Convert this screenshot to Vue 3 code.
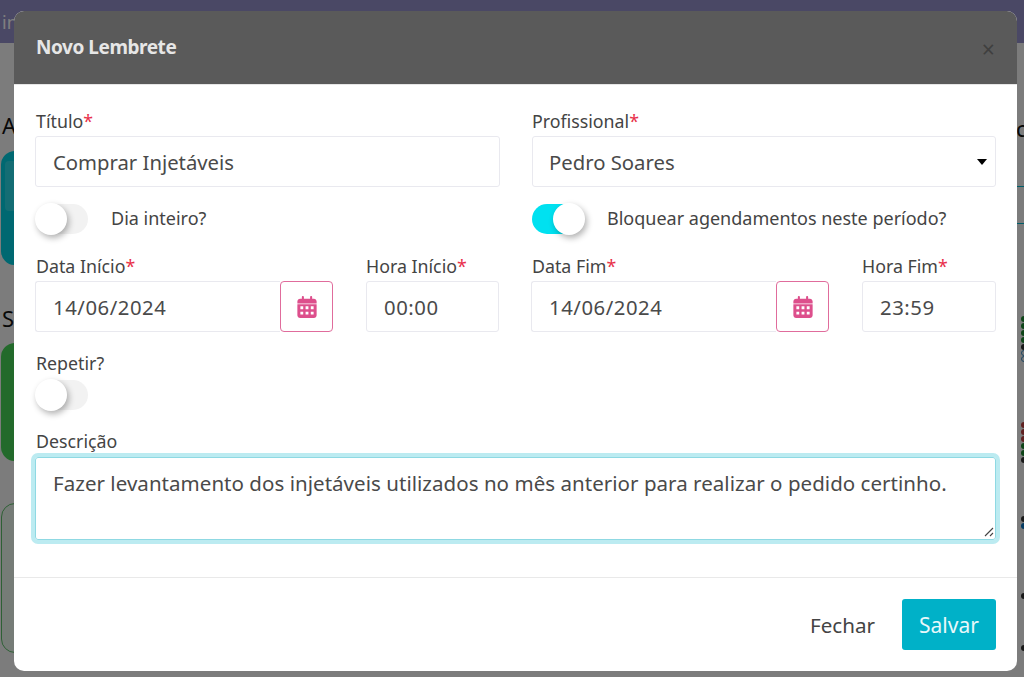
<script setup>
const dotsA = ['#1c8a30', '#1c8a30', '#1c8a30', '#1c8a30', '#333']
const dotsB = ['#c04040', '#c04040', '#c04040', '#1c8a30', '#1c8a30', '#333']
const calendarPath = 'M152 24c0-13-11-24-24-24s-24 11-24 24v40H64C29 64 0 93 0 128v48h448v-48c0-35-29-64-64-64h-40V24c0-13-11-24-24-24s-24 11-24 24v40H152V24zM0 192v256c0 35 29 64 64 64h320c35 0 64-29 64-64V192H0zM70 240h66v66H70zM191 240h66v66h-66zM312 240h66v66h-66zM70 364h66v66H70zM191 364h66v66h-66zM312 364h66v66h-66z'
</script>

<template>
  <div class="page">
    <header class="topbar"><span class="topbar-text">in</span></header>
    <div class="under">
      <div class="under-left">
        <div class="under-letter first">A</div>
        <div class="tile teal"><div class="tile-inner"></div></div>
        <div class="under-letter second">S</div>
        <div class="tile green"></div>
        <div class="tile outline"></div>
      </div>
      <div class="under-right">
        <div class="under-letter c">c</div>
        <div class="rule"></div>
        <div class="rule short"></div>
        <div class="dots">
          <i v-for="(c, n) in dotsA" :key="n" :style="{ background: c }"></i>
          <i class="ring"></i>
          <i class="ring"></i>
        </div>
        <div class="dots lower">
          <i v-for="(c, n) in dotsB" :key="n" :style="{ background: c }"></i>
        </div>
        <div class="dots third">
          <i class="dark"></i>
          <i class="blue"></i>
        </div>
        <div class="dots fourth"><i class="dark"></i></div>
        <div class="dots fifth"><i class="dark"></i></div>
      </div>
    </div>

    <div class="backdrop"></div>

    <section class="modal">
      <div class="modal-head">
        <h5>Novo Lembrete</h5>
        <span class="close">×</span>
      </div>
      <div class="modal-body">
        <div class="two-col">
          <div class="field lead">
            <label>Título<b>*</b></label>
            <div class="control">Comprar Injetáveis</div>
          </div>
          <div class="field">
            <label>Profissional<b>*</b></label>
            <div class="control select">Pedro Soares<span class="caret"></span></div>
          </div>
        </div>
        <div class="two-col toggles">
          <div class="toggle-row">
            <span class="switch"><span class="knob"></span></span>
            <span class="toggle-label">Dia inteiro?</span>
          </div>
          <div class="toggle-row shifted">
            <span class="switch on"><span class="knob"></span></span>
            <span class="toggle-label">Bloquear agendamentos neste período?</span>
          </div>
        </div>
        <div class="two-col dates">
          <div class="date-pair">
            <div class="field lead">
              <label>Data Início<b>*</b></label>
              <div class="group">
                <div class="control num">14/06/2024</div>
                <span class="cal">
                  <svg viewBox="0 0 448 512" width="20" height="22"><path fill="#dd4f8c" fill-rule="evenodd" :d="calendarPath"/></svg>
                </span>
              </div>
            </div>
            <div class="field">
              <label>Hora Início<b>*</b></label>
              <div class="control num">00:00</div>
            </div>
          </div>
          <div class="date-pair shifted">
            <div class="field lead">
              <label>Data Fim<b>*</b></label>
              <div class="group">
                <div class="control num">14/06/2024</div>
                <span class="cal">
                  <svg viewBox="0 0 448 512" width="20" height="22"><path fill="#dd4f8c" fill-rule="evenodd" :d="calendarPath"/></svg>
                </span>
              </div>
            </div>
            <div class="field">
              <label>Hora Fim<b>*</b></label>
              <div class="control num">23:59</div>
            </div>
          </div>
        </div>
        <div class="repeat lead">
          <label>Repetir?</label>
          <span class="switch"><span class="knob"></span></span>
        </div>
        <div class="field desc lead">
          <label>Descrição</label>
          <div class="textarea">
            Fazer levantamento dos injetáveis utilizados no mês anterior para realizar o pedido certinho.
            <svg class="grip" viewBox="0 0 10 10" width="10" height="10"><path d="M1 9 9 1M6 9 9 6" stroke="#444" stroke-width="1.1" fill="none"/></svg>
          </div>
        </div>
      </div>
      <div class="modal-foot">
        <span class="btn-text">Fechar</span>
        <span class="btn-save">Salvar</span>
      </div>
    </section>
  </div>
</template>

<style>
html, body { margin: 0; background: #fff; overflow: hidden; }
</style>

<style scoped>
.page {
  position: relative;
  width: 1024px;
  height: 677px;
  overflow: hidden;
  background: #f8f8f8;
  font-family: "Noto Sans", "Open Sans", sans-serif;
  color: #444;
}
.topbar { height: 43px; background: #9490ca; box-sizing: border-box; padding: 10px 0 0 2px; }
.topbar-text { color: #fff; font-size: 18px; }
.under { display: flex; justify-content: space-between; height: 634px; }
.under-left { width: 14px; overflow: hidden; flex: none; }
.under-right { width: 7px; overflow: hidden; flex: none; }
.under-letter { font-size: 22px; color: #111; line-height: 26px; }
.first { margin: 69px 0 0 2px; }
.second { margin: 40px 0 0 2px; }
.tile { width: 40px; margin-left: 1px; border-radius: 14px; box-sizing: border-box; }
.teal { height: 114px; margin-top: 13px; background: #00d0e2; padding: 10px 4px; }
.tile-inner { height: 50px; border-radius: 4px; background: #28dbe8; }
.green { height: 118px; margin-top: 12px; background: #46d456; }
.outline { height: 150px; margin-top: 42px; background: #edf8ef; border: 1px solid #5cc06a; }
.c { margin: 72px 0 0 -1px; height: 26px; }
.rule { height: 1px; background: #00bcd4; margin-top: 45px; }
.short { margin-top: 36px; }
.dots { display: flex; flex-direction: column; gap: 1px; margin-top: 92px; margin-left: 4px; }
.dots.lower { margin-top: 60px; }
.dots.third { margin-top: 53px; }
.dots.fourth { margin-top: 64px; }
.dots.fifth { margin-top: 46px; }
.dots i { display: block; width: 6px; height: 6px; border-radius: 50%; flex: none; }
.dots i.ring { box-sizing: border-box; border: 1px solid #3f90c8; margin-top: -1px; }
.dots i.dark { background: #333; }
.dots i.blue { background: #0a78c8; }

.backdrop { position: absolute; inset: 0; background: rgba(0, 0, 0, .5); }

.modal {
  position: absolute;
  left: 14px;
  top: 11px;
  width: 1003px;
  height: 660px;
  display: flex;
  flex-direction: column;
  background: #fff;
  border-radius: 10px;
  overflow: hidden;
}
.modal-head {
  height: 73px;
  flex: none;
  box-sizing: border-box;
  background: #5a5a5a;
  padding: 0 22px;
  display: flex;
  align-items: center;
  justify-content: space-between;
}
.modal-head h5 { margin: 0 0 1px; font-size: 19px; font-weight: 700; color: #e6e6e6; letter-spacing: -.45px; }
.close { font-size: 23px; color: #3f3f3f; margin: 3px 0 0 0; line-height: 1; }
.modal-body { flex: 1; padding: 26px 21px 0 21px; box-sizing: border-box; border-top: 1px solid #e6e6e6; }
.two-col { display: grid; grid-template-columns: 465px 464px; gap: 32px; }
.field label, .repeat label { display: block; font-size: 17.8px; line-height: 20px; margin-bottom: 5px; color: #444; }
.lead label { padding-left: 1px; }
label b { color: #e8304a; font-weight: 400; }
.control {
  height: 51px;
  box-sizing: border-box;
  border: 1px solid #e9e9ef;
  border-radius: 3px;
  display: flex;
  align-items: center;
  padding: 1px 17px 0;
  font-size: 20.3px;
  color: #4a4a4a;
  background: #fff;
}
.num { letter-spacing: .55px; padding-top: 0; }
.select { justify-content: space-between; padding-left: 16px; }
.caret {
  width: 0; height: 0;
  border-left: 5px solid transparent;
  border-right: 5px solid transparent;
  border-top: 6px solid #000;
  margin-right: -9px;
}
.toggles { margin-top: 17px; height: 30px; }
.toggle-row { display: flex; align-items: center; gap: 23px; height: 30px; }
.toggle-row.shifted { margin-left: -1px; }
.toggle-label { font-size: 18px; color: #444; padding-bottom: 2px; }
.switch {
  display: block;
  position: relative;
  width: 52px;
  height: 30px;
  border-radius: 15px;
  background: #f2f2f2;
  flex: none;
  margin-left: 1px;
}
.knob {
  position: absolute;
  left: -1px;
  top: -1px;
  width: 32px;
  height: 32px;
  border-radius: 50%;
  background: #fff;
  box-shadow: 2px 3px 6px rgba(0, 0, 0, .3);
}
.switch.on { background: #00e1f0; }
.switch.on .knob { left: 21px; }
.dates { margin-top: 22px; }
.date-pair { display: grid; grid-template-columns: 298px 133px; gap: 33px; }
.date-pair.shifted { grid-template-columns: 298px 134px; margin-left: -1px; }
.group { display: flex; }
.group .control { flex: 1; border-radius: 3px 0 0 3px; border-right: 0; min-width: 0; }
.cal {
  width: 53px;
  height: 51px;
  box-sizing: border-box;
  border: 1px solid #e06c9c;
  border-radius: 4px;
  display: flex;
  align-items: center;
  justify-content: center;
  flex: none;
}
.repeat { margin-top: 21px; }
.repeat label { margin-bottom: 7px; }
.desc { margin-top: 21px; }
.desc label { margin-bottom: 6px; }
.textarea {
  position: relative;
  height: 83px;
  box-sizing: border-box;
  border: 1px solid #8fd9e3;
  border-radius: 3px;
  box-shadow: 0 0 0 4px #bcebf1;
  padding: 11px 17px;
  font-size: 20.5px;
  letter-spacing: .04px;
  line-height: 28px;
  color: #4a4a4a;
}
.grip { position: absolute; right: 1px; bottom: 2px; }
.modal-foot {
  height: 94px;
  flex: none;
  box-sizing: border-box;
  border-top: 1px solid #e9e9e9;
  display: flex;
  align-items: flex-start;
  justify-content: flex-end;
  gap: 27px;
  padding: 21px 21px 0 0;
}
.btn-text { font-size: 20.6px; color: #444; line-height: 53px; }
.btn-save {
  width: 94px;
  height: 51px;
  box-sizing: border-box;
  background: #00b1c8;
  color: #e8f8fa;
  border-radius: 3px;
  font-size: 21px;
  padding-top: 1px;
  display: flex;
  align-items: center;
  justify-content: center;
}
</style>
